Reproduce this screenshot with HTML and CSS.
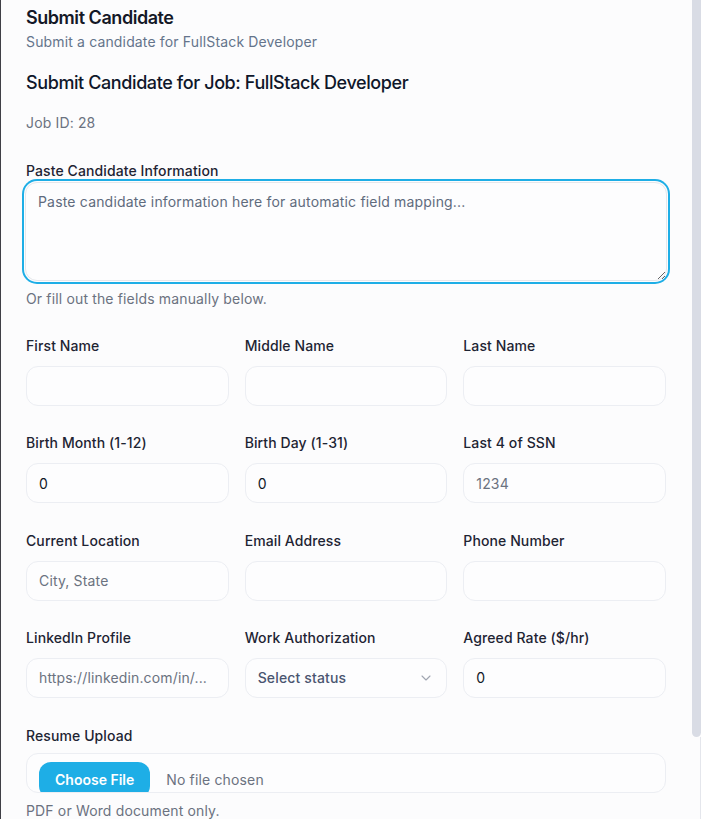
FILE: index.html
```html
<!DOCTYPE html>
<html lang="en">
<head>
<meta charset="utf-8">
<title>Submit Candidate</title>
<link rel="stylesheet" href="styles.css">
</head>
<body>
<div class="edge"></div>
<main class="panel">
  <header class="head">
    <h1 class="title">Submit Candidate</h1>
    <p class="subtitle">Submit a candidate for FullStack Developer</p>
  </header>
  <h2 class="job-title">Submit Candidate for Job: FullStack Developer</h2>
  <p class="job-id">Job ID: 28</p>

  <section class="paste">
    <label class="label paste-label">Paste Candidate Information</label>
    <textarea class="paste-area" placeholder="Paste candidate information here for automatic field mapping..."></textarea>
    <p class="hint">Or fill out the fields manually below.</p>
  </section>

  <section class="grid">
    <div class="field"><label class="label">First Name</label><input class="input" type="text"></div>
    <div class="field"><label class="label">Middle Name</label><input class="input" type="text"></div>
    <div class="field"><label class="label">Last Name</label><input class="input" type="text"></div>

    <div class="field"><label class="label">Birth Month (1-12)</label><input class="input" type="text" value="0"></div>
    <div class="field"><label class="label">Birth Day (1-31)</label><input class="input" type="text" value="0"></div>
    <div class="field"><label class="label">Last 4 of SSN</label><input class="input" type="text" placeholder="1234"></div>

    <div class="field"><label class="label">Current Location</label><input class="input" type="text" placeholder="City, State"></div>
    <div class="field"><label class="label">Email Address</label><input class="input" type="text"></div>
    <div class="field"><label class="label">Phone Number</label><input class="input" type="text"></div>

    <div class="field"><label class="label">LinkedIn Profile</label><input class="input" type="text" placeholder="https://linkedin.com/in/..."></div>
    <div class="field"><label class="label">Work Authorization</label>
      <div class="input select"><span class="select-text">Select status</span>
        <svg class="chevron" width="16" height="16" viewBox="0 0 24 24" fill="none" stroke="#a0a5b1" stroke-width="1.6" stroke-linecap="round" stroke-linejoin="round"><path d="m6 9 6 6 6-6"/></svg>
      </div>
    </div>
    <div class="field"><label class="label">Agreed Rate ($/hr)</label><input class="input" type="text" value="0"></div>
  </section>

  <section class="resume">
    <label class="label resume-label">Resume Upload</label>
    <div class="file">
      <span class="file-btn">Choose File</span>
      <span class="file-name">No file chosen</span>
    </div>
    <p class="hint file-hint">PDF or Word document only.</p>
  </section>
</main>
<div class="scroll-thumb"></div>
<div class="scroll-line"></div>
</body>
</html>
```
FILE: styles.css
```css
html, body {
  margin: 0;
  padding: 0;
  height: 100%;
  overflow: hidden;
  background: #fcfcfd;
}
body {
  position: relative;
  font-family: Inter, "Liberation Sans", sans-serif;
  color: #111827;
  letter-spacing: 0.15px;
}
.edge {
  position: absolute;
  left: 0;
  top: 0;
  width: 1px;
  height: 100%;
  background: #3f3f46;
}
.panel {
  padding: 4px 35px 0 26px;
}
.title {
  margin: 0;
  font-size: 18px;
  line-height: 28px;
  font-weight: 600;
  color: #141827;
  letter-spacing: -0.45px;
}
.subtitle {
  margin: 0;
  font-size: 14px;
  line-height: 20px;
  color: #64748b;
}
.job-title {
  margin: 17px 0 0;
  font-size: 18px;
  line-height: 28px;
  font-weight: 500;
  color: #0f172a;
  letter-spacing: -0.4px;
}
.job-id {
  margin: 16px 0 0;
  font-size: 14px;
  line-height: 20px;
  color: #6b7280;
}
.paste {
  margin-top: 28px;
}
.label {
  display: block;
  font-size: 14px;
  line-height: 20px;
  font-weight: 500;
  color: #1e2433;
  margin-bottom: 10px;
  letter-spacing: 0.1px;
}
.paste-label {
  margin-bottom: 1px;
}
.paste-area {
  display: block;
  box-sizing: border-box;
  width: calc(100% + 2px);
  margin: 0 0 0 -1px;
  height: 99px;
  padding: 9px 12px;
  border: 1px solid #e5e7eb;
  border-radius: 12px;
  background: #fdfdfe;
  box-shadow: 0 0 0 1px #fdfdfe, 0 0 0 3px #1eaee6;
  font-family: inherit;
  font-size: 14px;
  line-height: 20px;
  letter-spacing: 0.18px;
  color: #111827;
  resize: vertical;
  outline: none;
}
.paste-area::placeholder {
  color: #5f6b7d;
}
.hint {
  margin: 8px 0 0;
  font-size: 14px;
  line-height: 20px;
  color: #6b7280;
}
.grid {
  margin-top: 27px;
  display: grid;
  grid-template-columns: repeat(3, 1fr);
  column-gap: 16px;
  row-gap: 27.33px;
}
.field {
  display: flex;
  flex-direction: column;
  min-width: 0;
}
.input {
  box-sizing: border-box;
  width: 100%;
  height: 40px;
  margin: 0;
  padding: 0 12px;
  border: 1px solid #eceef3;
  border-radius: 12px;
  background: #fdfdfe;
  font-family: inherit;
  font-size: 14px;
  letter-spacing: 0.15px;
  color: #111827;
  outline: none;
}
.input::placeholder {
  color: #6b7280;
}
.select {
  display: flex;
  align-items: center;
  justify-content: space-between;
}
.select-text {
  font-weight: 500;
  color: #4a5570;
}
.chevron {
  flex: none;
}
.resume {
  margin-top: 28.33px;
}
.resume-label {
  margin-bottom: 7px;
}
.file {
  box-sizing: border-box;
  height: 40px;
  padding: 8px 12px 0;
  border: 1px solid #eceef3;
  border-radius: 12px;
  background: #fdfdfe;
  overflow: hidden;
  display: flex;
  align-items: flex-start;
}
.file-btn {
  flex: none;
  height: 36px;
  line-height: 36px;
  padding: 0 16px;
  border-radius: 12px;
  background: #1eaee6;
  color: #ffffff;
  font-size: 14px;
  font-weight: 600;
  letter-spacing: 0;
}
.file-name {
  margin-left: 16px;
  line-height: 36px;
  font-size: 14px;
  color: #6b7280;
}
.file-hint {
  margin-top: 8px;
}
.scroll-thumb {
  position: absolute;
  right: 0;
  top: 0;
  width: 9px;
  height: 737px;
  background: #d9dce5;
  border-radius: 0 0 5px 5px;
}
.scroll-line {
  position: absolute;
  right: 0;
  top: 737px;
  width: 1px;
  bottom: 0;
  background: #e4e6ec;
}
```
